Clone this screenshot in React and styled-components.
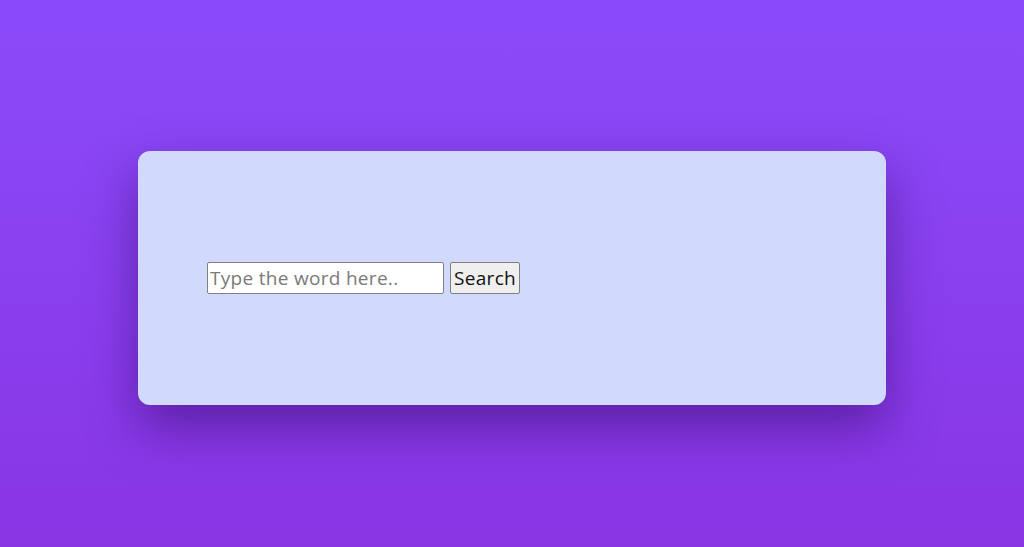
import React from 'react'
import styled, { createGlobalStyle } from 'styled-components'

const GlobalStyle = createGlobalStyle`
  html, body { margin: 0; padding: 0; }
  body {
    font-family: "Open Sans", "Noto Sans", sans-serif;
    background: linear-gradient(to bottom, #8b4bfa 0%, #8935e4 100%);
    min-height: 100vh;
  }
`

const Page = styled.div`
  height: 547px;
  box-sizing: border-box;
  padding-top: 151px;
  display: flex;
  justify-content: center;
  align-items: flex-start;
`

const Card = styled.div`
  width: 748px;
  height: 254px;
  box-sizing: border-box;
  padding-left: 69px;
  background: #d1dafd;
  border-radius: 12px;
  box-shadow: 0 22px 50px rgba(45, 5, 100, 0.5);
  display: flex;
  align-items: center;
  gap: 6px;
`

const WordInput = styled.input`
  width: 237px;
  height: 32px;
  box-sizing: border-box;
  padding: 0 2px;
  font-family: inherit;
  font-size: 19px;
  letter-spacing: 0.3px;
  color: #222;
  background: #fff;
  border: 1px solid #808080;
  border-radius: 2px;
  &::placeholder { color: #7a7a7a; }
`

const SearchButton = styled.button`
  width: 70px;
  height: 32px;
  box-sizing: border-box;
  padding: 0;
  font-family: inherit;
  font-size: 19px;
  letter-spacing: 0.3px;
  color: #111;
  background: #efefef;
  border: 1px solid #808080;
  border-radius: 2px;
`

export default function App() {
  return (
    <>
      <GlobalStyle />
      <Page>
        <Card>
          <WordInput type="text" placeholder="Type the word here.." />
          <SearchButton>Search</SearchButton>
        </Card>
      </Page>
    </>
  )
}
